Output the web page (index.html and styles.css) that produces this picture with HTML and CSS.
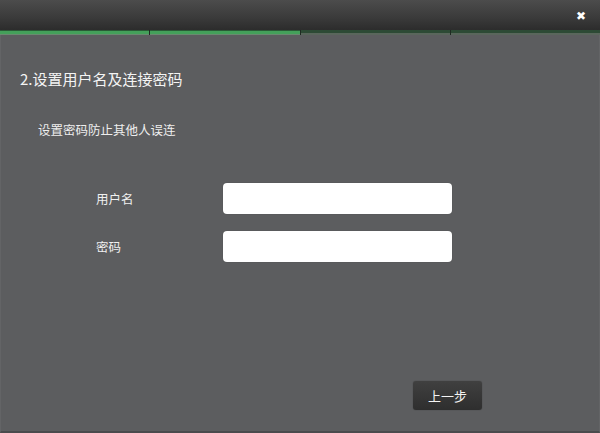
FILE: index.html
```html
<!DOCTYPE html>
<html>
<head>
<meta charset="utf-8">
<link rel="stylesheet" href="styles.css">
</head>
<body>
<div class="window">
  <div class="titlebar">
    <span class="close">&#x2716;</span>
  </div>
  <div class="progress">
    <div class="seg active"></div>
    <div class="seg active"></div>
    <div class="seg"></div>
    <div class="seg"></div>
  </div>
  <div class="content">
    <h1 class="title">2.设置用户名及连接密码</h1>
    <p class="subtitle">设置密码防止其他人误连</p>
    <div class="form">
      <div class="row">
        <label class="label">用户名</label>
        <div class="input"></div>
      </div>
      <div class="row">
        <label class="label">密码</label>
        <div class="input"></div>
      </div>
    </div>
    <div class="footer">
      <button class="btn">上一步</button>
    </div>
  </div>
</div>
</body>
</html>
```
FILE: styles.css
```css
html, body {
  margin: 0;
  padding: 0;
  width: 600px;
  height: 433px;
  overflow: hidden;
  background: #5c5d5f;
  font-family: "Noto Sans CJK SC", "Noto Sans", sans-serif;
}
.window {
  width: 600px;
  height: 433px;
  display: flex;
  flex-direction: column;
  background: #5c5d5f;
  box-sizing: border-box;
  border-left: 1px solid #636466;
  border-right: 1px solid #636466;
  border-bottom: 2px solid #4a4b4d;
}
.titlebar {
  height: 30px;
  background: linear-gradient(#4c4c4c, #3a3a3a 60%, #2c2c2c);
  display: flex;
  justify-content: flex-end;
  align-items: flex-start;
  margin: 0 -1px;
}
.close {
  color: #fff;
  font-family: "DejaVu Sans", sans-serif;
  font-size: 12px;
  line-height: 12px;
  margin-top: 10px;
  margin-right: 14px;
  font-weight: bold;
}
.progress {
  display: flex;
  gap: 1px;
  height: 5px;
  background: #1f2a22;
  margin: 0 -1px;
}
.seg {
  flex: 1;
  background: linear-gradient(#2d4a35 0, #2d4a35 60%, #5a665c 60%);
}
.seg.active {
  background: linear-gradient(#2a5a36 0, #2a5a36 20%, #44a05a 20%, #44a05a 80%, #6a8a70 80%);
}
.content {
  flex: 1;
  display: flex;
  flex-direction: column;
  padding: 0 0 0 19px;
  color: #f2f2f2;
}
.title {
  margin: 34px 0 0 0;
  font-size: 15px;
  font-weight: normal;
  line-height: 20px;
  color: #f4f4f4;
}
.subtitle {
  margin: 31px 0 0 18px;
  font-size: 12.5px;
  line-height: 20px;
  color: #eeeeee;
}
.form {
  margin-top: 43px;
  display: flex;
  flex-direction: column;
  gap: 17px;
}
.row {
  display: flex;
  align-items: center;
}
.label {
  width: 127px;
  padding-left: 76px;
  font-size: 12.5px;
  color: #f0f0f0;
}
.input {
  width: 229px;
  height: 31px;
  background: #ffffff;
  border-radius: 4px;
  box-shadow: 0 0 1px rgba(0,0,0,0.3);
}
.footer {
  margin-top: auto;
  margin-bottom: 21px;
  display: flex;
  justify-content: flex-end;
  padding-right: 117px;
}
.btn {
  width: 69px;
  height: 29px;
  border: none;
  border-radius: 3px;
  background: linear-gradient(#404040, #2e2e2e);
  color: #f4f4f4;
  font-family: "Noto Sans CJK SC", sans-serif;
  font-size: 13px;
  box-shadow: 0 0 1px rgba(0,0,0,0.5);
  padding: 0;
}
```
